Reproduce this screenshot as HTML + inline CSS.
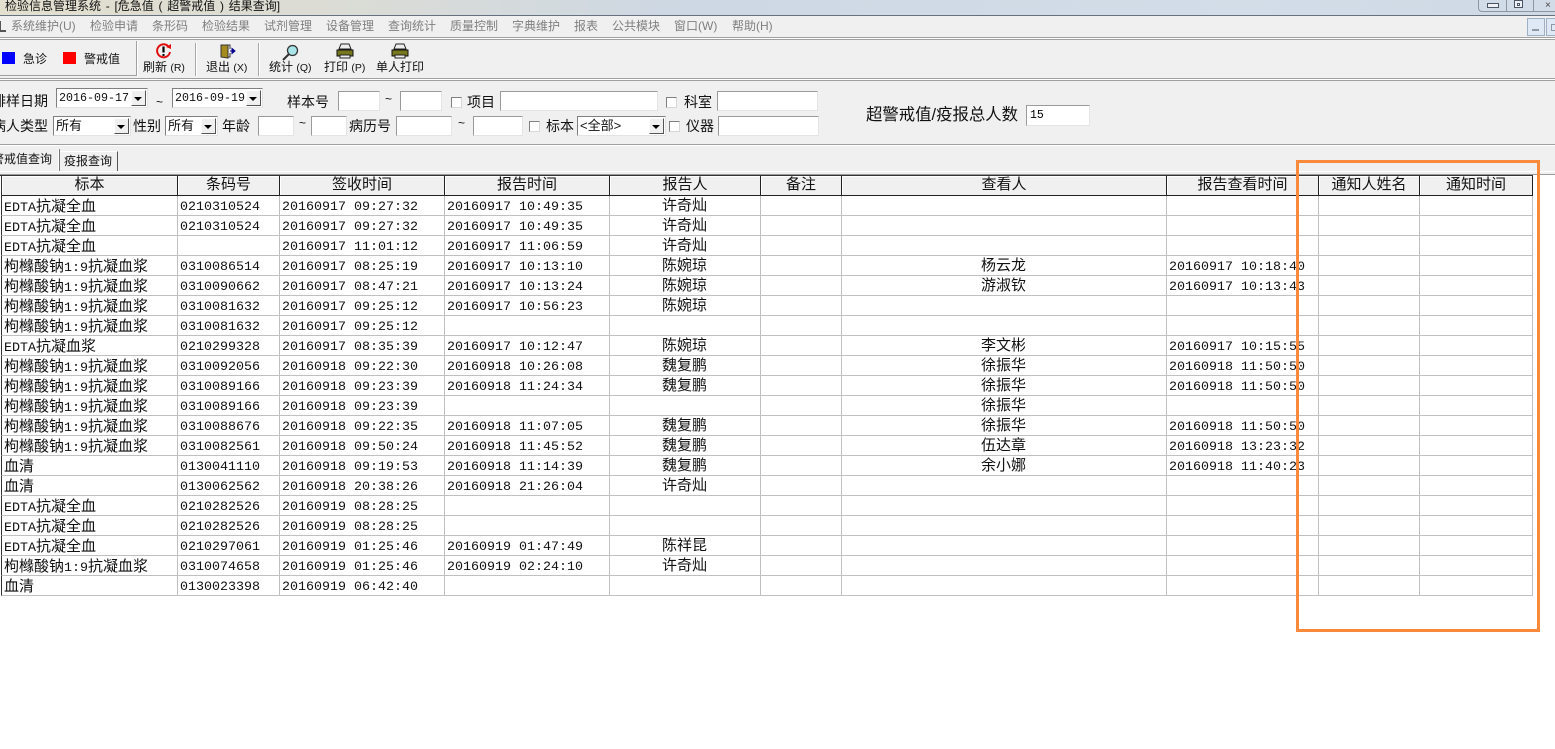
<!DOCTYPE html>
<html><head><meta charset="utf-8">
<style>
html,body{margin:0;padding:0;width:1555px;height:749px;overflow:hidden;background:#fff}
body{position:relative;font-family:"Liberation Sans","WenQuanYi Zen Hei","Noto Sans CJK SC",sans-serif;color:#000}
.a{position:absolute}
.t{position:absolute;white-space:nowrap;line-height:18px;height:18px;font-size:14px;color:#111}
.m{position:absolute;top:17px;white-space:nowrap;line-height:18px;font-size:12px;color:#7f7f7f}
.l{position:absolute;left:0;width:1555px;height:1px;background:#a0a0a0}
.w{position:absolute;left:0;width:1555px;height:1px;background:#fff}
.s{position:absolute;top:43px;height:33px;width:1px;background:#a8a8a8;border-right:1px solid #fff}
.b{position:absolute;white-space:nowrap;top:59px;line-height:16px;font-size:12px;color:#111;text-align:center}
.b i{font-style:normal;font-size:10.500px}
.i{position:absolute;box-sizing:border-box;background:#fff;border:1px solid;border-color:#9a9a9a #e4e4e4 #e4e4e4 #9a9a9a;height:20px}
.c{position:absolute;box-sizing:border-box;width:11px;height:11px;background:#fff;border:1px solid;border-color:#808080 #d8d8d8 #d8d8d8 #808080}
.k{position:absolute;box-sizing:border-box;background:#fff;border:1px solid;border-color:#808080 #e4e4e4 #e4e4e4 #808080;height:20px;font-size:13px;line-height:18px;padding-left:2px;white-space:nowrap;color:#111}
.k.d{font-family:"Liberation Mono",monospace;font-size:11.670px}
.k:after{content:"";position:absolute;right:1px;top:1px;width:15px;height:16px;background:#f0f0f0;border:1px solid;box-sizing:border-box;border-color:#fff #555 #555 #fff}
.k:before{content:"";position:absolute;z-index:1;right:5px;top:8px;border:4px solid transparent;border-top:4px solid #000;border-bottom:0}
table{position:absolute;left:1px;top:176px;border-collapse:separate;border-spacing:0;table-layout:fixed;width:1532px;font-family:"Liberation Mono",monospace;font-size:13.330px;color:#111}
tr{height:20px}
th,td{box-sizing:border-box;height:20px;max-height:20px;padding:4px 0 0 2px;border-right:1px solid #c0c0c0;border-bottom:1px solid #c0c0c0;overflow:visible;white-space:nowrap;font-weight:normal;line-height:10px}
th{background:#f0f0f0;border-right:1px solid #222;border-bottom:1px solid #222;border-top:0;text-align:center;font-family:"Liberation Sans","WenQuanYi Zen Hei","Noto Sans CJK SC",sans-serif;font-size:15px;padding:0 0 1px 0;box-shadow:inset 1px 1px 0 #fff}
td:first-child,th:first-child{border-left:1px solid #333}
td b{font-family:"WenQuanYi Zen Hei","Noto Sans CJK SC",sans-serif;font-weight:normal;font-size:15px;line-height:10px}
td.x{text-align:center;padding:0 1px 2px 0;font-family:"WenQuanYi Zen Hei","Noto Sans CJK SC",sans-serif;font-size:15px}
</style></head>
<body>
<!-- title bar -->
<div class="a" style="left:0;top:0;width:1555px;height:15px;background:linear-gradient(90deg,#e3e0cf 0,#dcdcd4 20%,#cdd8e4 45%,#d3dde8 80%,#cfd9e5 100%)"></div>
<div class="a" style="left:0;top:15px;width:1555px;height:1px;background:#66717f"></div>
<div class="t" style="left:5px;top:-3px;font-size:12px;word-spacing:1.400px;color:#111">检验信息管理系统 - [危急值 ( 超警戒值 ) 结果查询]</div>
<div class="a" style="left:1478px;top:-2px;width:80px;height:14px;box-sizing:border-box;border:1px solid #8a96a6;border-radius:0 0 0 4px;background:#d2dce8"></div>
<div class="a" style="left:1506px;top:0;width:1px;height:12px;background:#8a96a6"></div>
<div class="a" style="left:1533px;top:0;width:1px;height:12px;background:#8a96a6"></div>
<div class="a" style="left:1487px;top:3px;width:12px;height:5px;box-sizing:border-box;border:1px solid #4c5564;background:#eef2f7"></div>
<div class="a" style="left:1514px;top:0;width:9px;height:8px;box-sizing:border-box;border:1px solid #4c5564;background:#eef2f7"></div>
<div class="a" style="left:1517px;top:3px;width:3px;height:3px;box-sizing:border-box;border:1px solid #4c5564"></div>
<div class="a" style="left:1545px;top:2px;width:7px;height:7px;color:#444;font-size:10px;line-height:7px">×</div>
<!-- menu -->
<div class="a" style="left:0;top:16px;width:1555px;height:734px;background:#f0f0f0"></div>
<div class="a" style="left:0;top:21px;width:6px;height:11px;border-left:1px solid #555;border-bottom:2px solid #555;box-sizing:border-box"></div>
<div class="m" style="left:11px">系统维护(U)</div>
<div class="m" style="left:90px">检验申请</div>
<div class="m" style="left:152px">条形码</div>
<div class="m" style="left:202px">检验结果</div>
<div class="m" style="left:264px">试剂管理</div>
<div class="m" style="left:326px">设备管理</div>
<div class="m" style="left:388px">查询统计</div>
<div class="m" style="left:450px">质量控制</div>
<div class="m" style="left:512px">字典维护</div>
<div class="m" style="left:574px">报表</div>
<div class="m" style="left:612px">公共模块</div>
<div class="m" style="left:674px">窗口(W)</div>
<div class="m" style="left:732px">帮助(H)</div>
<div class="a" style="left:1527px;top:18px;width:18px;height:18px;box-sizing:border-box;border:1px solid #9fb0c4;background:#dfe9f5"></div>
<div class="a" style="left:1532px;top:29px;width:7px;height:2px;background:#8f98a5"></div>
<div class="a" style="left:1546px;top:18px;width:12px;height:18px;box-sizing:border-box;border:1px solid #9fb0c4;background:#dfe9f5"></div>
<div class="a" style="left:1551px;top:24px;width:6px;height:7px;box-sizing:border-box;border:1px solid #8f98a5"></div>
<div class="l" style="top:37px"></div><div class="w" style="top:38px"></div><div class="l" style="top:39px"></div>
<!-- toolbar -->
<div class="a" style="left:2px;top:52px;width:13px;height:12px;background:#0000ff"></div>
<div class="t" style="left:23px;top:50px;font-size:12px">急诊</div>
<div class="a" style="left:63px;top:52px;width:13px;height:12px;background:#ff0000"></div>
<div class="t" style="left:84px;top:50px;font-size:12px">警戒值</div>
<div class="a" style="left:136px;top:41px;width:1px;height:35px;background:#a0a0a0;border-right:1px solid #fff"></div>
<div class="a" style="left:0;top:75px;width:137px;height:1px;background:#a0a0a0"></div>
<div class="s" style="left:195px"></div>
<div class="s" style="left:258px"></div>
<svg class="a" style="left:155px;top:43px" width="18" height="16" viewBox="0 0 18 16"><path d="M13 3A6.500 6.500 0 1 0 15 9" fill="none" stroke="#e01010" stroke-width="2"/><path d="M11 4l5-3v5z" fill="#e01010"/><path d="M8.500 3.500v6" stroke="#000" stroke-width="2.200"/><path d="M8.500 11v2" stroke="#000" stroke-width="2"/></svg>
<svg class="a" style="left:220px;top:44px" width="16" height="15" viewBox="0 0 16 15"><path d="M1 1h7v13l-7-1z" fill="#a58a20" stroke="#333"/><path d="M8 1h2v4M10 9v4H8" fill="none" stroke="#333"/><path d="M10 7h3M12 4.500v5L15 7z" fill="#000088" stroke="#000088"/></svg>
<svg class="a" style="left:282px;top:44px" width="17" height="17" viewBox="0 0 17 17"><path d="M7 10L1 16" stroke="#333" stroke-width="2"/><circle cx="10.500" cy="6.500" r="5" fill="#a8e4e8" stroke="#333" stroke-width="1.300"/></svg>
<svg class="a" style="left:336px;top:43px" width="18" height="16" viewBox="0 0 18 16"><path d="M5 1h8l2 5H3z" fill="#eee" stroke="#222"/><path d="M1 7h16v6H1z" fill="#77771e" stroke="#111"/><path d="M4 12h10v3H4z" fill="#eee" stroke="#222"/></svg>
<svg class="a" style="left:391px;top:43px" width="18" height="16" viewBox="0 0 18 16"><path d="M5 1h8l2 5H3z" fill="#eee" stroke="#222"/><path d="M1 7h16v6H1z" fill="#77771e" stroke="#111"/><path d="M4 12h10v3H4z" fill="#eee" stroke="#222"/></svg>
<div class="b" style="left:143px">刷新 <i>(R)</i></div>
<div class="b" style="left:206px">退出 <i>(X)</i></div>
<div class="b" style="left:269px">统计 <i>(Q)</i></div>
<div class="b" style="left:324px">打印 <i>(P)</i></div>
<div class="b" style="left:376px">单人打印</div>
<div class="l" style="top:78px"></div><div class="w" style="top:79px"></div><div class="l" style="top:80px"></div>
<!-- filter row 1 -->
<div class="t" style="left:-8px;top:92px">排样日期</div>
<div class="k d" style="left:56px;top:88px;width:92px">2016-09-17</div>
<div class="t" style="left:156px;top:93px;font-size:12px">~</div>
<div class="k d" style="left:172px;top:88px;width:91px">2016-09-19</div>
<div class="t" style="left:287px;top:93px">样本号</div>
<div class="i" style="left:338px;top:91px;width:42px"></div>
<div class="t" style="left:385px;top:90px;font-size:12px">~</div>
<div class="i" style="left:400px;top:91px;width:42px"></div>
<div class="c" style="left:451px;top:97px"></div>
<div class="t" style="left:467px;top:93px">项目</div>
<div class="i" style="left:500px;top:91px;width:158px"></div>
<div class="c" style="left:666px;top:97px"></div>
<div class="t" style="left:684px;top:93px">科室</div>
<div class="i" style="left:717px;top:91px;width:101px"></div>
<!-- filter row 2 -->
<div class="t" style="left:-8px;top:117px">病人类型</div>
<div class="k" style="left:53px;top:116px;width:78px">所有</div>
<div class="t" style="left:133px;top:117px">性别</div>
<div class="k" style="left:165px;top:116px;width:53px">所有</div>
<div class="t" style="left:222px;top:117px">年龄</div>
<div class="i" style="left:258px;top:116px;width:36px"></div>
<div class="t" style="left:299px;top:114px;font-size:12px">~</div>
<div class="i" style="left:311px;top:116px;width:36px"></div>
<div class="t" style="left:349px;top:117px">病历号</div>
<div class="i" style="left:396px;top:116px;width:56px"></div>
<div class="t" style="left:458px;top:114px;font-size:12px">~</div>
<div class="i" style="left:473px;top:116px;width:50px"></div>
<div class="c" style="left:529px;top:121px"></div>
<div class="t" style="left:546px;top:117px">标本</div>
<div class="k" style="left:577px;top:116px;width:89px">&lt;全部&gt;</div>
<div class="c" style="left:669px;top:121px"></div>
<div class="t" style="left:686px;top:117px">仪器</div>
<div class="i" style="left:718px;top:116px;width:101px"></div>
<div class="t" style="left:866px;top:106px;font-size:16.400px">超警戒值/疫报总人数</div>
<div class="i" style="left:1026px;top:105px;width:64px;height:21px;font:11.500px/19px 'Liberation Mono',monospace;padding-left:3px">15</div>
<div class="l" style="top:144px"></div><div class="w" style="top:145px"></div>
<!-- tabs -->
<div class="t" style="left:-8px;top:150px;font-size:12px">警戒值查询</div>
<div class="a" style="left:58px;top:149px;width:1px;height:22px;background:#777;border-left:1px solid #fff"></div>
<div class="a" style="left:60px;top:151px;width:58px;height:20px;box-sizing:border-box;border-top:1px solid #fff;border-right:1px solid #555"></div>
<div class="t" style="left:64px;top:152px;font-size:12px">疫报查询</div>
<div class="a" style="left:0;top:171px;width:1555px;height:1px;background:#fff"></div>
<div class="a" style="left:0;top:174px;width:1555px;height:1px;background:#9a9a9a"></div>
<div class="a" style="left:0;top:175px;width:1555px;height:575px;background:#fff"></div>
<div class="a" style="left:0;top:175px;width:1533px;height:1px;background:#333"></div>
<table>
<colgroup><col style="width:177px"><col style="width:102px"><col style="width:165px"><col style="width:165px"><col style="width:151px"><col style="width:81px"><col style="width:325px"><col style="width:152px"><col style="width:101px"><col style="width:113px"></colgroup>
<tr><th>标本</th><th>条码号</th><th>签收时间</th><th>报告时间</th><th>报告人</th><th>备注</th><th>查看人</th><th>报告查看时间</th><th>通知人姓名</th><th>通知时间</th></tr>
<tr><td>EDTA<b>抗凝全血</b></td><td>0210310524</td><td>20160917 09:27:32</td><td>20160917 10:49:35</td><td class="x">许奇灿</td><td></td><td class="x"></td><td></td><td></td><td></td></tr>
<tr><td>EDTA<b>抗凝全血</b></td><td>0210310524</td><td>20160917 09:27:32</td><td>20160917 10:49:35</td><td class="x">许奇灿</td><td></td><td class="x"></td><td></td><td></td><td></td></tr>
<tr><td>EDTA<b>抗凝全血</b></td><td></td><td>20160917 11:01:12</td><td>20160917 11:06:59</td><td class="x">许奇灿</td><td></td><td class="x"></td><td></td><td></td><td></td></tr>
<tr><td><b>枸橼酸钠</b>1:9<b>抗凝血浆</b></td><td>0310086514</td><td>20160917 08:25:19</td><td>20160917 10:13:10</td><td class="x">陈婉琼</td><td></td><td class="x">杨云龙</td><td>20160917 10:18:40</td><td></td><td></td></tr>
<tr><td><b>枸橼酸钠</b>1:9<b>抗凝血浆</b></td><td>0310090662</td><td>20160917 08:47:21</td><td>20160917 10:13:24</td><td class="x">陈婉琼</td><td></td><td class="x">游淑钦</td><td>20160917 10:13:43</td><td></td><td></td></tr>
<tr><td><b>枸橼酸钠</b>1:9<b>抗凝血浆</b></td><td>0310081632</td><td>20160917 09:25:12</td><td>20160917 10:56:23</td><td class="x">陈婉琼</td><td></td><td class="x"></td><td></td><td></td><td></td></tr>
<tr><td><b>枸橼酸钠</b>1:9<b>抗凝血浆</b></td><td>0310081632</td><td>20160917 09:25:12</td><td></td><td class="x"></td><td></td><td class="x"></td><td></td><td></td><td></td></tr>
<tr><td>EDTA<b>抗凝血浆</b></td><td>0210299328</td><td>20160917 08:35:39</td><td>20160917 10:12:47</td><td class="x">陈婉琼</td><td></td><td class="x">李文彬</td><td>20160917 10:15:55</td><td></td><td></td></tr>
<tr><td><b>枸橼酸钠</b>1:9<b>抗凝血浆</b></td><td>0310092056</td><td>20160918 09:22:30</td><td>20160918 10:26:08</td><td class="x">魏复鹏</td><td></td><td class="x">徐振华</td><td>20160918 11:50:50</td><td></td><td></td></tr>
<tr><td><b>枸橼酸钠</b>1:9<b>抗凝血浆</b></td><td>0310089166</td><td>20160918 09:23:39</td><td>20160918 11:24:34</td><td class="x">魏复鹏</td><td></td><td class="x">徐振华</td><td>20160918 11:50:50</td><td></td><td></td></tr>
<tr><td><b>枸橼酸钠</b>1:9<b>抗凝血浆</b></td><td>0310089166</td><td>20160918 09:23:39</td><td></td><td class="x"></td><td></td><td class="x">徐振华</td><td></td><td></td><td></td></tr>
<tr><td><b>枸橼酸钠</b>1:9<b>抗凝血浆</b></td><td>0310088676</td><td>20160918 09:22:35</td><td>20160918 11:07:05</td><td class="x">魏复鹏</td><td></td><td class="x">徐振华</td><td>20160918 11:50:50</td><td></td><td></td></tr>
<tr><td><b>枸橼酸钠</b>1:9<b>抗凝血浆</b></td><td>0310082561</td><td>20160918 09:50:24</td><td>20160918 11:45:52</td><td class="x">魏复鹏</td><td></td><td class="x">伍达章</td><td>20160918 13:23:32</td><td></td><td></td></tr>
<tr><td><b>血清</b></td><td>0130041110</td><td>20160918 09:19:53</td><td>20160918 11:14:39</td><td class="x">魏复鹏</td><td></td><td class="x">余小娜</td><td>20160918 11:40:23</td><td></td><td></td></tr>
<tr><td><b>血清</b></td><td>0130062562</td><td>20160918 20:38:26</td><td>20160918 21:26:04</td><td class="x">许奇灿</td><td></td><td class="x"></td><td></td><td></td><td></td></tr>
<tr><td>EDTA<b>抗凝全血</b></td><td>0210282526</td><td>20160919 08:28:25</td><td></td><td class="x"></td><td></td><td class="x"></td><td></td><td></td><td></td></tr>
<tr><td>EDTA<b>抗凝全血</b></td><td>0210282526</td><td>20160919 08:28:25</td><td></td><td class="x"></td><td></td><td class="x"></td><td></td><td></td><td></td></tr>
<tr><td>EDTA<b>抗凝全血</b></td><td>0210297061</td><td>20160919 01:25:46</td><td>20160919 01:47:49</td><td class="x">陈祥昆</td><td></td><td class="x"></td><td></td><td></td><td></td></tr>
<tr><td><b>枸橼酸钠</b>1:9<b>抗凝血浆</b></td><td>0310074658</td><td>20160919 01:25:46</td><td>20160919 02:24:10</td><td class="x">许奇灿</td><td></td><td class="x"></td><td></td><td></td><td></td></tr>
<tr><td><b>血清</b></td><td>0130023398</td><td>20160919 06:42:40</td><td></td><td class="x"></td><td></td><td class="x"></td><td></td><td></td><td></td></tr>
</table>
<!-- orange highlight -->
<div class="a" style="left:1296px;top:160px;width:244px;height:472px;box-sizing:border-box;border:3px solid #f98a3c"></div>
</body></html>
